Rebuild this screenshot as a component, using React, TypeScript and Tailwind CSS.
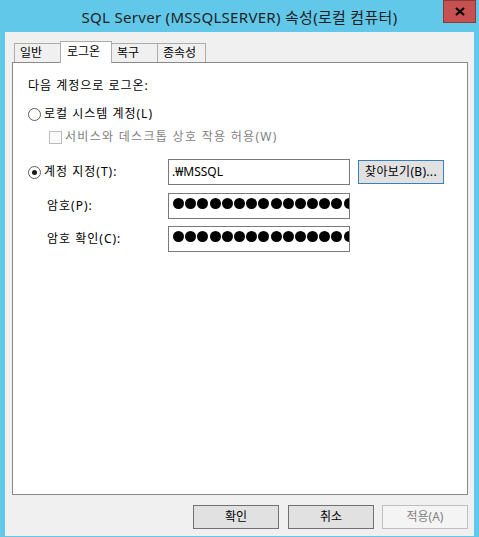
import React from "react";

const tabs = [
  { label: "일반", w: "w-[47px]" },
  { label: "로그온", w: "w-[52px]", active: true },
  { label: "복구", w: "w-[47px]" },
  { label: "종속성", w: "w-[49px]" },
];

function Radio({ checked }: { checked?: boolean }) {
  return (
    <span className="flex h-[13px] w-[13px] shrink-0 items-center justify-center rounded-full border border-[#5c5c5c] bg-white">
      {checked && <span className="h-[5px] w-[5px] rounded-full bg-[#1a1a1a]" />}
    </span>
  );
}

function Dots() {
  return (
    <div className="flex h-[26px] w-[182px] gap-[1.2px] overflow-hidden border border-[#7a7a7a] bg-white pl-[4px] pt-[4px]">
      {Array.from({ length: 16 }).map((_, i) => (
        <span key={i} className="h-[11px] w-[11px] shrink-0 rounded-full bg-black" />
      ))}
    </div>
  );
}

export default function App() {
  return (
    <div className="h-[537px] w-[479px] overflow-hidden bg-[#62c8ea] font-['Noto_Sans','Noto_Sans_CJK_KR',sans-serif] text-[12px] text-black">
      {/* Title bar */}
      <div className="relative flex h-[32px] items-center justify-center pt-[3px] text-[15px] tracking-[0.3px] text-[#1e1e1e]">
        SQL Server (MSSQLSERVER) 속성(로컬 컴퓨터)
        <div className="absolute right-[3px] top-0 flex h-[23px] w-[33px] items-center justify-center border border-[#8a3a3a] bg-[#c75050]">
          <svg width="10" height="9" viewBox="0 0 10 9">
            <path d="M1 1 L9 8 M9 1 L1 8" stroke="#000" strokeWidth="2.2" />
          </svg>
        </div>
      </div>

      {/* Client area */}
      <div className="mx-[5px] h-[504px] w-[469px] bg-[#f0f0f0]">
        {/* Tabs */}
        <div className="ml-[9px] flex h-[30px] items-end pt-[9px]">
          {tabs.map((t, i) => (
            <div
              key={t.label}
              className={
                (i > 0 ? "-ml-px " : "") +
                t.w +
                (t.active
                  ? " relative z-10 -mb-px h-[22px] border border-b-0 border-[#acacac] bg-white pl-[6px] leading-[19px]"
                  : " h-[19px] border border-b-0 border-[#acacac] bg-[#f0f0f0] pl-[5px] leading-[18px]")
              }
            >
              {t.label}
            </div>
          ))}
        </div>

        {/* Tab panel */}
        <div className="ml-[7px] h-[433px] w-[456px] border border-[#898989] bg-white tracking-[1px]">
          <div className="ml-[15px] mt-[15px] h-[16px] leading-[16px]">다음 계정으로 로그온:</div>

          <div className="ml-[15px] mt-[12px] flex h-[16px] items-center gap-[3px]">
            <Radio />
            <span>로컬 시스템 계정(L)</span>
          </div>

          <div className="ml-[36px] mt-[7px] flex h-[16px] items-center gap-[3px] text-[#7f7f7f] tracking-[1.3px]">
            <span className="h-[13px] w-[13px] border border-[#bcbcbc] bg-[#fafafa]" />
            <span>서비스와 데스크톱 상호 작용 허용(W)</span>
          </div>

          <div className="mt-[14px] flex items-center">
            <div className="flex w-[155px] items-center gap-[3px] pl-[15px]">
              <Radio checked />
              <span>계정 지정(T):</span>
            </div>
            <div className="flex h-[26px] w-[182px] items-center border border-[#7a7a7a] bg-white pl-[3px] tracking-normal">
              .₩MSSQL
            </div>
            <button className="ml-[8px] h-[24px] w-[86px] border border-[#3c7fb1] bg-[#e1e1e1] tracking-[0.3px]">
              찾아보기(B)...
            </button>
          </div>

          <div className="mt-[8px] flex items-center">
            <div className="w-[155px] pl-[34px]">암호(P):</div>
            <Dots />
          </div>

          <div className="mt-[7px] flex items-center">
            <div className="w-[155px] pl-[34px]">암호 확인(C):</div>
            <Dots />
          </div>
        </div>

        {/* Buttons */}
        <div className="mr-[6px] mt-[10px] flex justify-end gap-[9px]">
          <button className="h-[24px] w-[86px] border border-[#707070] bg-[#e1e1e1]">확인</button>
          <button className="h-[24px] w-[86px] border border-[#707070] bg-[#e1e1e1]">취소</button>
          <button className="-ml-px h-[24px] w-[86px] border border-[#bfbfbf] bg-[#f4f4f4] text-[#838383]">
            적용(A)
          </button>
        </div>
      </div>
    </div>
  );
}
